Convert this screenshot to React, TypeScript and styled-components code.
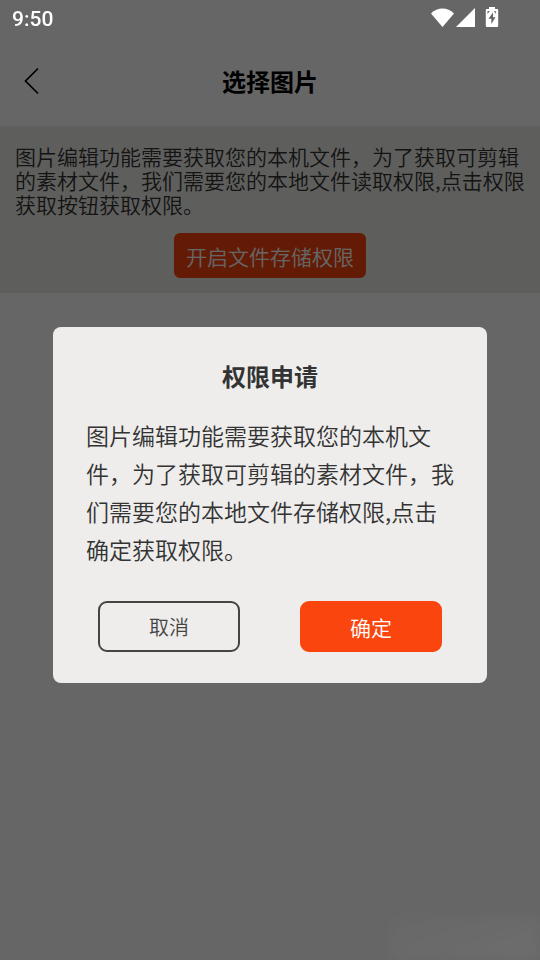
import React from 'react';
import styled, { createGlobalStyle } from 'styled-components';

const GlobalStyle = createGlobalStyle`
  * { box-sizing: border-box; }
  body {
    margin: 0;
    background: #ffffff;
    font-family: "Noto Sans CJK SC", sans-serif;
    font-weight: 350;
  }
  button { font-family: inherit; font-weight: inherit; cursor: pointer; }
`;

const Page = styled.div`
  min-height: 100vh;
  background: #ffffff;
`;

const StatusBar = styled.div`
  position: relative;
  z-index: 2;
  display: flex;
  align-items: center;
  justify-content: space-between;
  height: 36px;
  padding: 2px 41px 0 12px;
  color: #ffffff;
`;

const Clock = styled.time`
  font: 500 21px/24px Roboto, sans-serif;
`;

const StatusIcons = styled.div`
  display: flex;
  align-items: center;
`;

const Header = styled.header`
  display: grid;
  grid-template-columns: 64px 1fr 64px;
  align-items: center;
  height: 90px;
`;

const BackButton = styled.button`
  display: flex;
  align-items: center;
  height: 64px;
  padding: 0 0 0 24px;
  border: 0;
  background: none;
  color: #000000;
`;

const PageTitle = styled.h1`
  margin: 0;
  text-align: center;
  font-size: 24px;
  font-weight: 700;
  line-height: 36px;
  color: #000000;
`;

const Notice = styled.section`
  display: flex;
  flex-direction: column;
  align-items: center;
  gap: 17px;
  padding: 18px 15px 15px;
  background: #ebebe7;
`;

const NoticeText = styled.p`
  width: 100%;
  margin: 0;
  font-size: 21px;
  line-height: 24px;
  color: #333333;
`;

const Button = styled.button<{ $outlined?: boolean; $size?: number }>`
  padding: 0 12px;
  border: 2px solid ${(p) => (p.$outlined ? '#444444' : '#fa450e')};
  border-radius: 9px;
  background: ${(p) => (p.$outlined ? 'transparent' : '#fa450e')};
  color: ${(p) => (p.$outlined ? '#444444' : '#ffffff')};
  font-size: ${(p) => p.$size ?? 21}px;
  line-height: 24px;
`;

const GrantButton = styled(Button)`
  height: 45px;
  padding: 0 10px;
  border-radius: 6px;
`;

const Scrim = styled.div`
  position: fixed;
  inset: 0;
  z-index: 1;
  display: flex;
  align-items: center;
  justify-content: center;
  padding: 50px 53px 0;
  background: rgba(0, 0, 0, 0.6);
`;

const CornerGlow = styled.div`
  position: absolute;
  right: 0;
  bottom: 0;
  width: 150px;
  height: 44px;
  background: linear-gradient(160deg, rgba(255, 255, 255, 0.01), rgba(255, 255, 255, 0.05));
  filter: blur(6px);
`;

const Dialog = styled.div`
  width: 100%;
  max-width: 434px;
  padding: 31px 33px;
  border-radius: 8px;
  background: #eeedeb;
`;

const DialogTitle = styled.h2`
  margin: 0 0 22px;
  text-align: center;
  font-size: 24px;
  font-weight: 700;
  line-height: 36px;
  color: #333333;
`;

const DialogText = styled.p`
  margin: 0 0 33px;
  font-size: 23px;
  line-height: 38px;
  color: #333333;
`;

const Actions = styled.div`
  display: grid;
  grid-template-columns: 1fr 1fr;
  gap: 60px;
  padding: 0 12px;

  ${Button} { height: 51px; }
`;

export default function App() {
  return (
    <Page>
      <GlobalStyle />
      <StatusBar>
        <Clock>9:50</Clock>
        <StatusIcons>
          <svg width="68" height="26" viewBox="0 0 68 26" fill="currentColor" aria-hidden="true">
            <path d="M0 7.5C6.5 0.7 16.500 0.700 23 7.500L11.500 21Z" />
            <path d="M44 2V21H25Z" />
            <path
              fillRule="evenodd"
              d="M58 1h6v2h2a1.200 1.200 0 0 1 1.200 1.200v15.600a1.200 1.200 0 0 1-1.200 1.200H56a1.200 1.200 0 0 1-1.200-1.200V4.200A1.200 1.200 0 0 1 56 3h2ZM62 6.500l-4.500 6.200h2.800v5.300l4.200-6.800h-2.500ZM56.500 5v3l2.300-3ZM63 5l1.800 3V5Z"
            />
          </svg>
        </StatusIcons>
      </StatusBar>
      <Header>
        <BackButton type="button" aria-label="返回">
          <svg width="16" height="28" viewBox="0 0 16 28" fill="none" stroke="currentColor" strokeWidth="1.700" aria-hidden="true">
            <path d="M14 1.500 1.500 14 14 26.500" />
          </svg>
        </BackButton>
        <PageTitle>选择图片</PageTitle>
      </Header>
      <Notice>
        <NoticeText>
          图片编辑功能需要获取您的本机文件，为了获取可剪辑的素材文件，我们需要您的本地文件读取权限,点击权限获取按钮获取权限。
        </NoticeText>
        <GrantButton type="button">开启文件存储权限</GrantButton>
      </Notice>
      <Scrim>
        <CornerGlow />
        <Dialog role="dialog" aria-modal="true" aria-labelledby="permission-title">
          <DialogTitle id="permission-title">权限申请</DialogTitle>
          <DialogText>
            图片编辑功能需要获取您的本机文件，为了获取可剪辑的素材文件，我们需要您的本地文件存储权限,点击确定获取权限。
          </DialogText>
          <Actions>
            <Button type="button" $outlined $size={20}>取消</Button>
            <Button type="button">确定</Button>
          </Actions>
        </Dialog>
      </Scrim>
    </Page>
  );
}
